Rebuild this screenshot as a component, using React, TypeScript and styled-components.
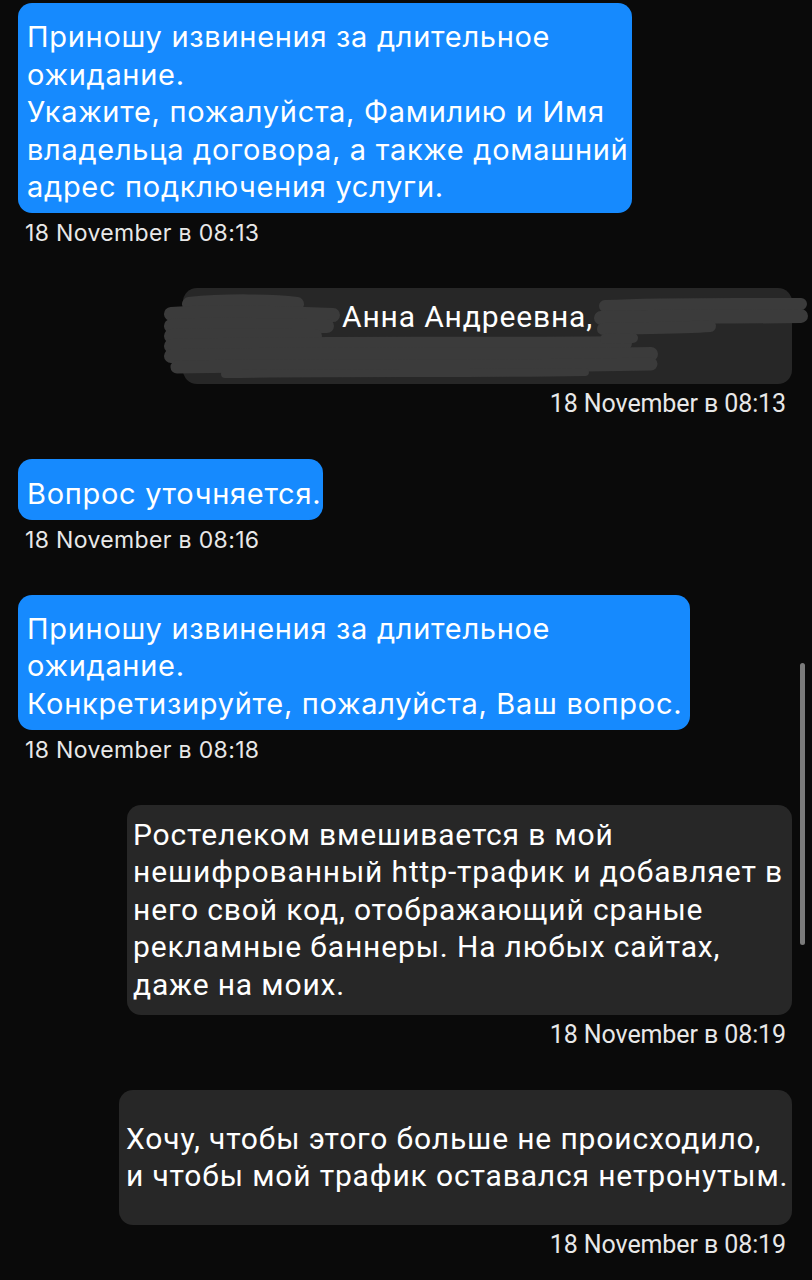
import React from "react";
import styled, { createGlobalStyle } from "styled-components";

const Global = createGlobalStyle`
  html, body { margin: 0; padding: 0; background: #0a0a0a; }
  body { font-family: "Inter", "Liberation Sans", sans-serif; -webkit-font-smoothing: antialiased; }
`;

const Screen = styled.div`
  position: relative;
  width: 812px;
  height: 1280px;
  overflow: hidden;
  background: #0a0a0a;
  box-sizing: border-box;
  padding: 3px 20px 0 18px;
  display: flex;
  flex-direction: column;
  gap: 42px;
`;

const Group = styled.div<{ $out?: boolean }>`
  display: flex;
  flex-direction: column;
  align-items: ${(p) => (p.$out ? "flex-end" : "flex-start")};
  gap: 7px;
`;

const Bubble = styled.div<{ $out?: boolean; $w: number; $pt?: number; $pb?: number; $px?: number }>`
  position: relative;
  width: ${(p) => p.$w}px;
  box-sizing: border-box;
  padding: ${(p) => p.$pt ?? 15}px ${(p) => p.$px ?? 9}px ${(p) => p.$pb ?? 7}px;
  border-radius: 14px;
  background: ${(p) => (p.$out ? "#272727" : "#168afe")};
  color: #ffffff;
`;

const Line = styled.div<{ $out?: boolean }>`
  white-space: nowrap;
  font-family: ${(p) => (p.$out ? '"Roboto", "Liberation Sans", sans-serif' : '"Inter", "Liberation Sans", sans-serif')};
  font-size: ${(p) => (p.$out ? "30px" : "29px")};
  letter-spacing: ${(p) => (p.$out ? "0.85px" : "0.7px")};
  line-height: 37.6px;
`;

const Stamp = styled.div<{ $out?: boolean }>`
  font-family: ${(p) => (p.$out ? '"Roboto", "Liberation Sans", sans-serif' : '"Inter", "Liberation Sans", sans-serif')};
  font-size: ${(p) => (p.$out ? "25px" : "23px")};
  letter-spacing: ${(p) => (p.$out ? "-0.1px" : "0.35px")};
  line-height: 26px;
  color: #e8e8e8;
  padding: ${(p) => (p.$out ? "0 6px 0 0" : "0 0 0 7px")};
`;

const RedactText = styled(Line)`
  position: relative;
  z-index: 2;
  padding-left: 150px;
`;

const Scribble = styled.svg`
  position: absolute;
  left: -18px;
  top: 0;
  overflow: visible;
  z-index: 1;
  pointer-events: none;
`;

const Scrollbar = styled.div`
  position: absolute;
  left: 800px;
  top: 663px;
  width: 5px;
  height: 282px;
  border-radius: 3px;
  background: #7b7b7b;
`;

type Msg = { out?: boolean; w: number; lines: string[]; time: string; pt?: number; pb?: number; px?: number };

const first: Msg = {
  w: 614,
  lines: [
    "Приношу извинения за длительное",
    "ожидание.",
    "Укажите, пожалуйста, Фамилию и Имя",
    "владельца договора, а также домашний",
    "адрес подключения услуги.",
  ],
  time: "18 November в 08:13",
};

const rest: Msg[] = [
  { w: 305, lines: ["Вопрос уточняется."], time: "18 November в 08:16", pt: 16, pb: 7 },
  {
    w: 672,
    lines: ["Приношу извинения за длительное", "ожидание.", "Конкретизируйте, пожалуйста, Ваш вопрос."],
    time: "18 November в 08:18",
  },
  {
    out: true,
    w: 665,
    px: 6,
    pt: 11,
    pb: 11,
    lines: [
      "Ростелеком вмешивается в мой",
      "нешифрованный http-трафик и добавляет в",
      "него свой код, отображающий сраные",
      "рекламные баннеры. На любых сайтах,",
      "даже на моих.",
    ],
    time: "18 November в 08:19",
  },
  {
    out: true,
    w: 673,
    px: 7,
    pt: 30,
    pb: 30,
    lines: ["Хочу, чтобы этого больше не происходило,", "и чтобы мой трафик оставался нетронутым."],
    time: "18 November в 08:19",
  },
];

function Message({ m }: { m: Msg }) {
  return (
    <Group $out={m.out}>
      <Bubble $out={m.out} $w={m.w} $pt={m.pt} $pb={m.pb} $px={m.px}>
        {m.lines.map((l, i) => (
          <Line key={i} $out={m.out}>
            {l}
          </Line>
        ))}
      </Bubble>
      <Stamp $out={m.out}>{m.time}</Stamp>
    </Group>
  );
}

function Redacted() {
  const c = "#3b3b3b";
  return (
    <Group $out>
      <Bubble $out $w={609} $pt={10} $pb={11} $px={9}>
        <Scribble width="640" height="100" viewBox="0 0 640 100">
          <g stroke={c} strokeLinecap="round" strokeLinejoin="round" fill="none">
            <path d="M24 16 C60 12 110 13 132 16" strokeWidth="14" />
            <path d="M6 26 C60 23 120 25 168 27" strokeWidth="14" />
            <path d="M6 38 C60 35 120 38 162 38" strokeWidth="14" />
            <path d="M6 48 C60 46 120 48 150 48" strokeWidth="14" />
            <path d="M6 58 C150 54 320 57 460 55" strokeWidth="14" />
            <path d="M6 68 C150 65 320 68 486 66" strokeWidth="14" />
            <path d="M12 79 C150 76 300 80 486 76" strokeWidth="13" />
            <path d="M60 86 C200 84 300 86 420 84" strokeWidth="8" />
            <path d="M440 18 C500 15 570 16 636 16" strokeWidth="12" />
            <path d="M436 30 C500 28 570 29 636 28" strokeWidth="14" />
            <path d="M438 41 C480 40 520 40 545 38" strokeWidth="12" />
            <path d="M440 51 C450 50 460 50 468 50" strokeWidth="10" />
          </g>
        </Scribble>
        <RedactText $out>Анна Андреевна,</RedactText>
        <Line $out>&nbsp;</Line>
      </Bubble>
      <Stamp $out>18 November в 08:13</Stamp>
    </Group>
  );
}

export default function App() {
  return (
    <>
      <Global />
      <Screen>
        <Message m={first} />
        <Redacted />
        {rest.map((m, i) => (
          <Message key={i} m={m} />
        ))}
        <Scrollbar />
      </Screen>
    </>
  );
}
